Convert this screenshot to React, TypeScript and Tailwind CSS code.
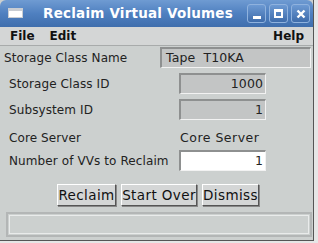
import React from "react";

const font = { fontFamily: '"DejaVu Sans", "Liberation Sans", sans-serif' };

function WinBtn({ children }: { children: React.ReactNode }) {
  return (
    <div className="w-[19px] h-[19px] rounded-[3px] border border-[#8fb2de] bg-gradient-to-b from-[#6d9ad3] to-[#3e6cab] flex items-center justify-center">
      {children}
    </div>
  );
}

function Field({ value, white, className }: { value: string; white?: boolean; className: string }) {
  return (
    <div
      className={`shrink-0 h-[21px] border-t-2 border-l-2 border-b border-r border-t-[#8e9090] border-l-[#8e9090] border-b-[#f2f2f2] border-r-[#f2f2f2] flex items-center text-[12.5px] text-[#222] whitespace-pre ${
        white ? "bg-white" : "bg-[#c3c5c5]"
      } ${className}`}
    >
      {value}
    </div>
  );
}

function Btn({ label, w }: { label: string; w: string }) {
  return (
    <div
      className={`${w} h-[22px] border border-t-white border-l-white border-b-[#555] border-r-[#555] bg-[#d4d6d6] flex items-center justify-center text-[13.5px] tracking-[0.4px] text-[#111] shadow-[1px_1px_0_#888]`}
    >
      {label}
    </div>
  );
}

export default function App() {
  return (
    <div className="w-[318px] h-[243px] bg-[#e6e6e6] overflow-hidden" style={font}>
      <div className="w-[314px] h-[241px] bg-[#ccd0cf] border-r border-b border-[#555] flex flex-col">
        {/* title bar */}
        <div className="h-[27px] rounded-t-[6px] bg-gradient-to-b from-[#6f9bd2] via-[#4f80c0] to-[#3f6ead] flex items-center pl-[8px] pr-[3px] shrink-0">
          <div className="w-[15px] h-[10px] bg-white border-t-[3px] border-[#c9cdd3] border-x border-b mt-[-1px]" />
          <div className="flex-1 text-center text-white font-bold text-[13.5px] pl-[6px] tracking-[0.2px]">
            Reclaim Virtual Volumes
          </div>
          <div className="flex gap-[3px]">
            <WinBtn>
              <div className="w-[8px] h-[3px] bg-white mt-[8px]" />
            </WinBtn>
            <WinBtn>
              <div className="w-[9px] h-[9px] border-2 border-white border-t-[3px]" />
            </WinBtn>
            <WinBtn>
              <svg width="10" height="10" viewBox="0 0 10 10">
                <path d="M1.5 1.5 L8.5 8.5 M8.5 1.5 L1.5 8.5" stroke="white" strokeWidth="2.4" />
              </svg>
            </WinBtn>
          </div>
        </div>
        {/* menu bar */}
        <div className="h-[19px] flex items-center font-bold text-[12px] text-[#111] pl-[10px] pr-[9px] border-b border-[#a8abab] shrink-0 bg-[#d4d6d6]">
          <span>File</span>
          <span className="ml-[15px]">Edit</span>
          <span className="ml-auto">Help</span>
        </div>
        {/* content */}
        <div className="flex flex-col text-[12px] text-[#222] pt-[1px] whitespace-nowrap tracking-[0.1px]">
          <div className="flex items-center h-[21px] pl-[4px]">
            <span className="w-[156px] shrink-0">Storage Class Name</span>
            <Field value="Tape  T10KA" className="w-[151px] pl-[4px]" />
          </div>
          <div className="flex items-center h-[21px] pl-[9px] mt-[5px]">
            <span className="w-[170px] shrink-0">Storage Class ID</span>
            <Field value="1000" className="w-[87px] justify-end pr-[2px]" />
          </div>
          <div className="flex items-center h-[21px] pl-[9px] mt-[5px]">
            <span className="w-[170px] shrink-0">Subsystem ID</span>
            <Field value="1" className="w-[87px] justify-end pr-[2px]" />
          </div>
          <div className="flex items-center h-[24px] pl-[9px] mt-[6px]">
            <span className="w-[171px] shrink-0">Core Server</span>
            <span className="text-[12.5px] tracking-[0.5px]">Core Server</span>
          </div>
          <div className="flex items-center h-[21px] pl-[9px] mt-[0px]">
            <span className="w-[170px] shrink-0">Number of VVs to Reclaim</span>
            <Field value="1" white className="w-[87px] justify-end pr-[2px]" />
          </div>
          <div className="flex gap-[5px] pl-[57px] mt-[13px]">
            <Btn label="Reclaim" w="w-[59px]" />
            <Btn label="Start Over" w="w-[76px]" />
            <Btn label="Dismiss" w="w-[57px]" />
          </div>
          <div className="ml-[6px] mt-[6px] w-[306px] h-[25px] border-2 border-[#b3b6b6] p-[1px]">
            <div className="w-full h-full border border-[#e9ebeb]" />
          </div>
        </div>
      </div>
    </div>
  );
}
